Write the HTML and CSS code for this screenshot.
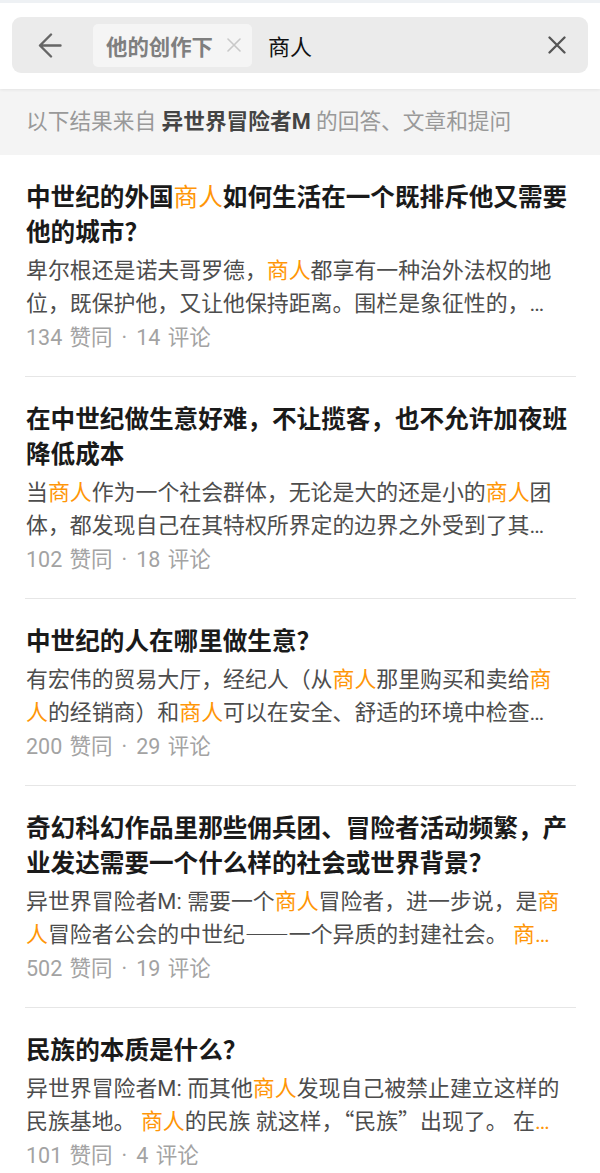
FILE: index.html
```html
<!DOCTYPE html>
<html lang="zh-CN">
<head>
  <meta charset="UTF-8" />
  <meta name="viewport" content="width=device-width, initial-scale=1.0"/>
  <title>搜索 - 他的创作下</title>
  <link rel="stylesheet" href="styles.css">
</head>
<body>
  <header class="search-header">
    <div class="search-bar">
      <button class="icon-btn back-btn" aria-label="返回">
        <svg width="24" height="25" viewBox="0 0 24 25" fill="none" stroke="#666" stroke-width="2.4" stroke-linecap="round" stroke-linejoin="round">
          <path d="M2 12.5H22.5M13 1.5L2 12.5L13 23.5"/>
        </svg>
      </button>
      <span class="scope-chip">
        他的创作下
        <svg class="chip-close" width="14" height="14" viewBox="0 0 14 14" stroke="#c9c9c9" stroke-width="1.6" stroke-linecap="round">
          <path d="M1 1L13 13M13 1L1 13"/>
        </svg>
      </span>
      <span class="query">商人</span>
      <button class="icon-btn clear-btn" aria-label="清除">
        <svg width="18" height="18" viewBox="0 0 18 18" stroke="#555" stroke-width="2.3" stroke-linecap="round">
          <path d="M1.5 1.5L16.5 16.5M16.5 1.5L1.5 16.5"/>
        </svg>
      </button>
    </div>
  </header>

  <div class="scope-note">以下结果来自 <b>异世界冒险者M</b> 的回答、文章和提问</div>

  <ul class="results">
    <li class="result">
      <h3 class="result-title">中世纪的外国<em>商人</em>如何生活在一个既排斥他又需要他的城市？</h3>
      <p class="result-snippet">卑尔根还是诺夫哥罗德，<em>商人</em>都享有一种治外法权的地位，既保护他，又让他保持距离。围栏是象征性的，…</p>
      <div class="result-meta">134 赞同<span class="dot">·</span>14 评论</div>
    </li>
    <li class="result">
      <h3 class="result-title">在中世纪做生意好难，不让揽客，也不允许加夜班降低成本</h3>
      <p class="result-snippet">当<em>商人</em>作为一个社会群体，无论是大的还是小的<em>商人</em>团体，都发现自己在其特权所界定的边界之外受到了其…</p>
      <div class="result-meta">102 赞同<span class="dot">·</span>18 评论</div>
    </li>
    <li class="result">
      <h3 class="result-title">中世纪的人在哪里做生意？</h3>
      <p class="result-snippet">有宏伟的贸易大厅，经纪人（从<em>商人</em>那里购买和卖给<em>商人</em>的经销商）和<em>商人</em>可以在安全、舒适的环境中检查…</p>
      <div class="result-meta">200 赞同<span class="dot">·</span>29 评论</div>
    </li>
    <li class="result">
      <h3 class="result-title">奇幻科幻作品里那些佣兵团、冒险者活动频繁，产业发达需要一个什么样的社会或世界背景？</h3>
      <p class="result-snippet">异世界冒险者M: 需要一个<em>商人</em>冒险者，进一步说，是<em>商人</em>冒险者公会的中世纪<span class="cjk">——</span>一个异质的封建社会。 <em>商…</em></p>
      <div class="result-meta">502 赞同<span class="dot">·</span>19 评论</div>
    </li>
    <li class="result">
      <h3 class="result-title">民族的本质是什么？</h3>
      <p class="result-snippet">异世界冒险者M: 而其他<em>商人</em>发现自己被禁止建立这样的民族基地。 <em>商人</em>的民族 就这样，<span class="cjk">“</span>民族<span class="cjk">”</span>出现了。 在<em>…</em></p>
      <div class="result-meta">101 赞同<span class="dot">·</span>4 评论</div>
    </li>
  </ul>
</body>
</html>
```

FILE: styles.css
```css
body {
  margin: 0;
  font-family: Roboto, 'Noto Sans CJK SC', sans-serif;
  background: #fff;
  color: #1a1a1a;
}

.search-header {
  border-top: 3px solid #eef1f4;
  background: #fff;
  padding: 14px 12px 16px;
  position: relative;
  z-index: 1;
  box-shadow: 0 1px 3px rgba(0, 0, 0, 0.07);
}

.search-bar {
  display: flex;
  align-items: center;
  height: 56px;
  background: #ebebeb;
  border-radius: 9px;
}

.icon-btn {
  border: none;
  background: none;
  padding: 0;
  display: flex;
  cursor: pointer;
}

.back-btn {
  margin-left: 26px;
}

.scope-chip {
  display: flex;
  align-items: center;
  height: 43px;
  margin-left: 31px;
  padding: 0 11px 0 13px;
  background: #f5f5f5;
  border-radius: 5px;
  color: #7f7f7f;
  font-size: 21.4px;
  font-weight: 700;
}

.chip-close {
  margin-left: 14px;
}

.query {
  flex: 1;
  margin-left: 16px;
  font-size: 22px;
  color: #111;
}

.clear-btn {
  margin-right: 22px;
}

.scope-note {
  background: #f4f4f4;
  height: 66px;
  line-height: 66px;
  padding-left: 26px;
  font-size: 21.7px;
  color: #999;
}

.scope-note b {
  color: #444;
}

.results {
  list-style: none;
  margin: 0;
  padding: 0;
}

.result {
  margin: 0 24px 0 25px;
  padding: 25px 7px 23px 1px;
  border-bottom: 1px solid #e6e6e6;
}

.result-title {
  margin: 0;
  font-size: 24.6px;
  line-height: 35px;
  font-weight: 700;
  color: #1a1a1a;
}

.result-title em,
.result-snippet em {
  font-style: normal;
  font-weight: 400;
  color: #ff9607;
}

.result-snippet {
  margin: 4px 0 0;
  font-size: 21.9px;
  line-height: 33px;
  color: #4d4d4d;
}

/* CJK dash and quotes; keep their box inside the line */
.cjk {
  font-family: 'Noto Sans CJK SC', sans-serif;
  font-feature-settings: "fwid";
  line-height: 1;
}

.result-meta {
  margin-top: 3px;
  font-size: 21.5px;
  line-height: 30px;
  color: #a3a3a3;
  word-spacing: 2px;
}

.dot {
  margin: 0 9px;
}
```
